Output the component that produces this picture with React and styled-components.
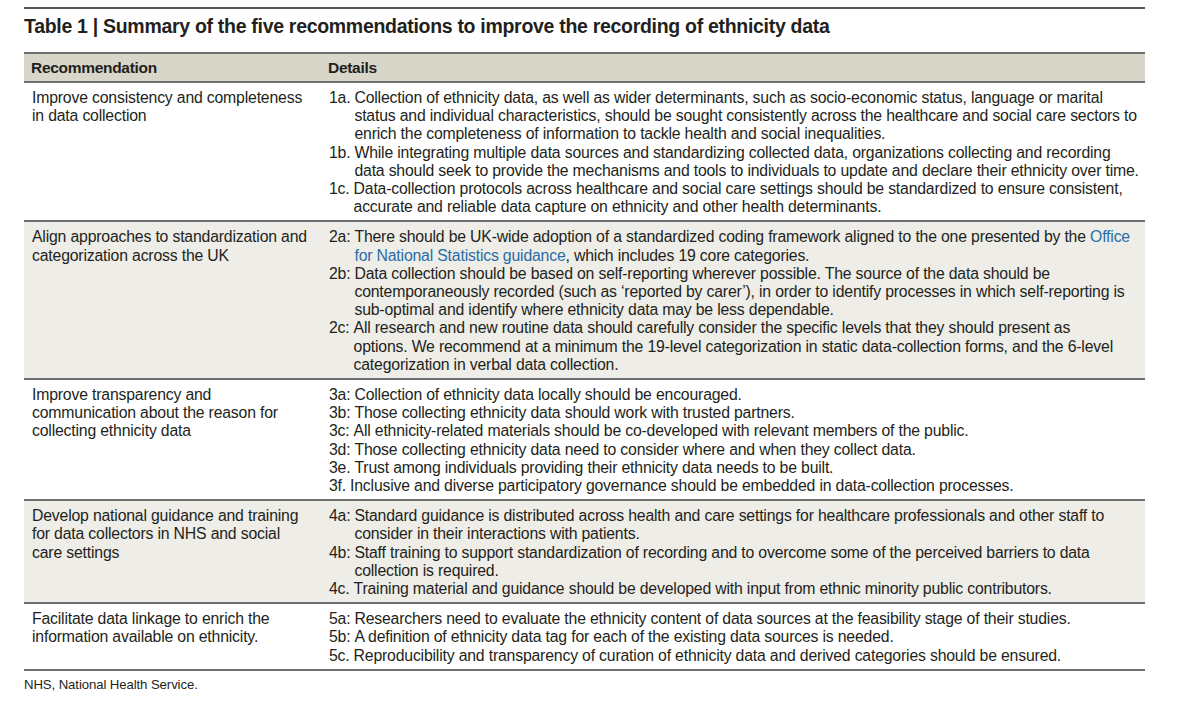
import React from "react";
import styled, { createGlobalStyle } from "styled-components";

const GlobalStyle = createGlobalStyle`
  body {
    margin: 0;
    background: #ffffff;
    font-family: "Liberation Sans", Arial, sans-serif;
    color: #231f20;
  }
`;

const Page = styled.div`
  width: 1121px;
  margin-left: 24px;
  padding-top: 7px;
`;

const Caption = styled.div`
  border-top: 2px solid #555;
  padding-top: 5px;
  height: 38px;
  font-size: 19.5px;
  font-weight: bold;
  letter-spacing: -0.3px;
  line-height: 24px;
  color: #231f20;
  white-space: nowrap;
`;

const Table = styled.div`
  border-top: 2px solid #6f6f6f;
  border-bottom: 2px solid #6f6f6f;
`;

const HeaderRow = styled.div`
  display: grid;
  grid-template-columns: 297px 1fr;
  background: #d8d6c8;
  border-bottom: 2px solid #6f6f6f;
  height: 27px;
  align-items: center;
`;

const HeaderCell = styled.div`
  padding-left: 7px;
  font-size: 15.5px;
  font-weight: bold;
  letter-spacing: -0.3px;
`;

const Row = styled.div`
  display: grid;
  grid-template-columns: 297px 1fr;
  background: ${(p) => (p.$shaded ? "#eeede7" : "#ffffff")};
  padding: 6px 0 4px;
  & + & {
    border-top: 2px solid #6f6f6f;
  }
`;

const Cell = styled.div`
  padding-left: 8px;
  font-size: 15.8px;
  line-height: 18.2px;
  letter-spacing: -0.18px;
`;

const Line = styled.div`
  white-space: nowrap;
`;

const Item = styled.div`
  display: flex;
`;

const Label = styled.span`
  flex: none;
  margin-right: 4px;
`;

const ItemText = styled.div`
  flex: 1;
`;

const Link = styled.span`
  color: #2a6ca8;
`;

const Footnote = styled.div`
  padding-top: 6px;
  font-size: 13.2px;
  letter-spacing: -0.1px;
`;

const rows = [
  {
    title: ["Improve consistency and completeness", "in data collection"],
    items: [
      {
        label: "1a.",
        lines: [
          "Collection of ethnicity data, as well as wider determinants, such as socio-economic status, language or marital",
          "status and individual characteristics, should be sought consistently across the healthcare and social care sectors to",
          "enrich the completeness of information to tackle health and social inequalities.",
        ],
      },
      {
        label: "1b.",
        lines: [
          "While integrating multiple data sources and standardizing collected data, organizations collecting and recording",
          "data should seek to provide the mechanisms and tools to individuals to update and declare their ethnicity over time.",
        ],
      },
      {
        label: "1c.",
        lines: [
          "Data-collection protocols across healthcare and social care settings should be standardized to ensure consistent,",
          "accurate and reliable data capture on ethnicity and other health determinants.",
        ],
      },
    ],
  },
  {
    title: ["Align approaches to standardization and", "categorization across the UK"],
    shaded: true,
    items: [
      {
        label: "2a:",
        lines: [
          <>
            There should be UK-wide adoption of a standardized coding framework aligned to the one presented by the{" "}
            <Link>Office</Link>
          </>,
          <>
            <Link>for National Statistics guidance</Link>, which includes 19 core categories.
          </>,
        ],
      },
      {
        label: "2b:",
        lines: [
          "Data collection should be based on self-reporting wherever possible. The source of the data should be",
          "contemporaneously recorded (such as \u2018reported by carer\u2019), in order to identify processes in which self-reporting is",
          "sub-optimal and identify where ethnicity data may be less dependable.",
        ],
      },
      {
        label: "2c:",
        lines: [
          "All research and new routine data should carefully consider the specific levels that they should present as",
          "options. We recommend at a minimum the 19-level categorization in static data-collection forms, and the 6-level",
          "categorization in verbal data collection.",
        ],
      },
    ],
  },
  {
    title: ["Improve transparency and", "communication about the reason for", "collecting ethnicity data"],
    items: [
      { label: "3a:", lines: ["Collection of ethnicity data locally should be encouraged."] },
      { label: "3b:", lines: ["Those collecting ethnicity data should work with trusted partners."] },
      { label: "3c:", lines: ["All ethnicity-related materials should be co-developed with relevant members of the public."] },
      { label: "3d:", lines: ["Those collecting ethnicity data need to consider where and when they collect data."] },
      { label: "3e.", lines: ["Trust among individuals providing their ethnicity data needs to be built."] },
      { label: "3f.", lines: ["Inclusive and diverse participatory governance should be embedded in data-collection processes."] },
    ],
  },
  {
    title: ["Develop national guidance and training", "for data collectors in NHS and social", "care settings"],
    shaded: true,
    items: [
      {
        label: "4a:",
        lines: [
          "Standard guidance is distributed across health and care settings for healthcare professionals and other staff to",
          "consider in their interactions with patients.",
        ],
      },
      {
        label: "4b:",
        lines: [
          "Staff training to support standardization of recording and to overcome some of the perceived barriers to data",
          "collection is required.",
        ],
      },
      {
        label: "4c.",
        lines: ["Training material and guidance should be developed with input from ethnic minority public contributors."],
      },
    ],
  },
  {
    title: ["Facilitate data linkage to enrich the", "information available on ethnicity."],
    items: [
      {
        label: "5a:",
        lines: ["Researchers need to evaluate the ethnicity content of data sources at the feasibility stage of their studies."],
      },
      { label: "5b:", lines: ["A definition of ethnicity data tag for each of the existing data sources is needed."] },
      {
        label: "5c.",
        lines: ["Reproducibility and transparency of curation of ethnicity data and derived categories should be ensured."],
      },
    ],
  },
];

export default function App() {
  return (
    <>
      <GlobalStyle />
      <Page>
        <Caption>Table 1 | Summary of the five recommendations to improve the recording of ethnicity data</Caption>
        <Table>
          <HeaderRow>
            <HeaderCell>Recommendation</HeaderCell>
            <HeaderCell>Details</HeaderCell>
          </HeaderRow>
          {rows.map((row, i) => (
            <Row key={i} $shaded={row.shaded}>
              <Cell>
                {row.title.map((t, j) => (
                  <Line key={j}>{t}</Line>
                ))}
              </Cell>
              <Cell>
                {row.items.map((item) => (
                  <Item key={item.label}>
                    <Label>{item.label}</Label>
                    <ItemText>
                      {item.lines.map((l, k) => (
                        <Line key={k}>{l}</Line>
                      ))}
                    </ItemText>
                  </Item>
                ))}
              </Cell>
            </Row>
          ))}
        </Table>
        <Footnote>NHS, National Health Service.</Footnote>
      </Page>
    </>
  );
}
